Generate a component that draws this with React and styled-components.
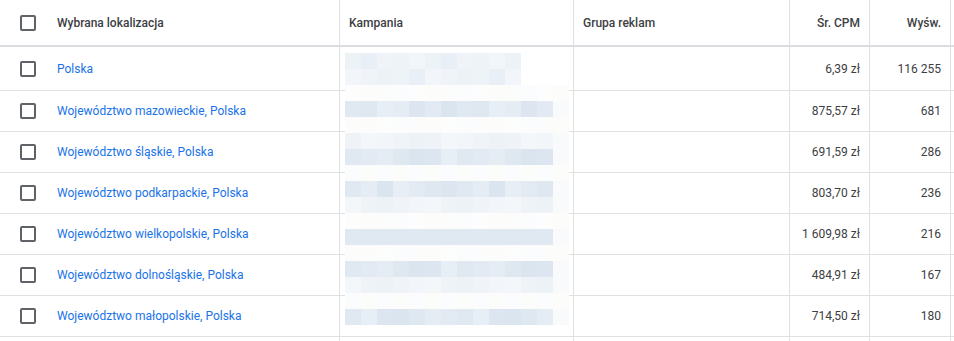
import styled, { createGlobalStyle } from 'styled-components';

const GlobalStyle = createGlobalStyle`
	html, body {
		margin: 0;
		padding: 0;
		background: #ffffff;
		overflow: hidden;
	}
	body {
		font-family: Roboto, 'Liberation Sans', Arial, sans-serif;
	}
`;

const COLUMNS = '339px 234px 216px 80px 81px 1fr';

const rows = [
	{ place: 'Polska', cpm: '6,39 zł', views: '116 255' },
	{ place: 'Województwo mazowieckie, Polska', cpm: '875,57 zł', views: '681' },
	{ place: 'Województwo śląskie, Polska', cpm: '691,59 zł', views: '286' },
	{ place: 'Województwo podkarpackie, Polska', cpm: '803,70 zł', views: '236' },
	{ place: 'Województwo wielkopolskie, Polska', cpm: '1 609,98 zł', views: '216' },
	{ place: 'Województwo dolnośląskie, Polska', cpm: '484,91 zł', views: '167' },
	{ place: 'Województwo małopolskie, Polska', cpm: '714,50 zł', views: '180' },
];

// pixelated (redacted) campaign names: one entry per 16px band
const bands = ['L1', 'L1', 'W', 'D', 'W', 'L', 'D', 'W', 'D', 'L', 'W', 'D', 'W', 'D', 'L', 'W', 'D'];

const palette = {
	D: ['#e0e8f1', '#dae5f0', '#e3eaf3', '#dde6f0', '#e5ecf4', '#e8eef5', '#dfe7f1'],
	L: ['#eff3f8', '#f2f5f9', '#edf2f7', '#f4f7fa', '#f0f4f8'],
	L1: ['#edf2f7', '#f0f4f8', '#f2f5f9', '#e9eff6', '#eef3f8'],
	W: ['#fcfcfc', '#fbfcfd', '#fdfdfd', '#fcfcfb'],
};

const tileColor = (tone, row, col) => {
	if (tone === 'L1' && col >= 11) return 'transparent';
	if (tone !== 'L1' && tone !== 'W' && col === 13) return '#f9fafb';
	const list = palette[tone];
	return list[(row * 7 + col * 3 + col * row) % list.length];
};

const App = () => {
	return (
		<Page>
			<GlobalStyle />
			<Table>
				<HeaderRow>
					<FirstCell>
						<Checkbox />
						<span>Wybrana lokalizacja</span>
					</FirstCell>
					<Cell>Kampania</Cell>
					<Cell>Grupa reklam</Cell>
					<Cell $right>Śr. CPM</Cell>
					<Cell $right>Wyśw.</Cell>
					<Cell />
				</HeaderRow>
				{rows.map((r, i) => (
					<Row key={r.place} $first={i === 0}>
						<FirstCell>
							<Checkbox />
							<Link>{r.place}</Link>
						</FirstCell>
						<Cell />
						<Cell />
						<Cell $right>{r.cpm}</Cell>
						<Cell $right>{r.views}</Cell>
						<Cell />
					</Row>
				))}
				<Row>
					<FirstCell />
					<Cell />
					<Cell />
					<Cell />
					<Cell />
					<Cell />
				</Row>

				<Mosaic>
					{bands.map((tone, r) => (
						<MosaicRow key={r}>
							{Array.from({ length: 14 }).map((_, c) => (
								<Tile key={c} $bg={tileColor(tone, r, c)} />
							))}
						</MosaicRow>
					))}
				</Mosaic>
			</Table>
		</Page>
	);
};

export default App;

const Page = styled.div`
	width: 954px;
	height: 341px;
	overflow: hidden;
	background: #ffffff;
`;

const Table = styled.div`
	position: relative;
	width: 100%;
	font-size: 12px;
	color: #3c4043;
`;

const HeaderRow = styled.div`
	display: grid;
	grid-template-columns: ${COLUMNS};
	height: 45px;
	border-bottom: 2px solid #dadce0;
	font-weight: 500;
	color: #3c4043;
`;

const Row = styled.div`
	display: grid;
	grid-template-columns: ${COLUMNS};
	height: ${(p) => (p.$first ? '43px' : '40px')};
	border-bottom: 1px solid #e0e0e0;
`;

const Cell = styled.div`
	display: flex;
	align-items: center;
	justify-content: ${(p) => (p.$right ? 'flex-end' : 'flex-start')};
	padding: 0 9px 0 9px;
	border-left: 1px solid #e0e0e0;
	white-space: nowrap;
	overflow: hidden;
`;

const FirstCell = styled.div`
	display: flex;
	align-items: center;
	gap: 21px;
	padding-left: 20px;
	white-space: nowrap;
`;

const Checkbox = styled.span`
	display: inline-block;
	box-sizing: border-box;
	width: 16px;
	height: 16px;
	border: 2px solid #5f6368;
	border-radius: 2px;
	flex: none;
`;

const Link = styled.span`
	color: #1a73e8;
`;

const Mosaic = styled.div`
	position: absolute;
	left: 345px;
	top: 53px;
	display: flex;
	flex-direction: column;
	pointer-events: none;
`;

const MosaicRow = styled.div`
	display: flex;
`;

const Tile = styled.div`
	width: 16px;
	height: 16px;
	background: ${(p) => p.$bg};
`;
